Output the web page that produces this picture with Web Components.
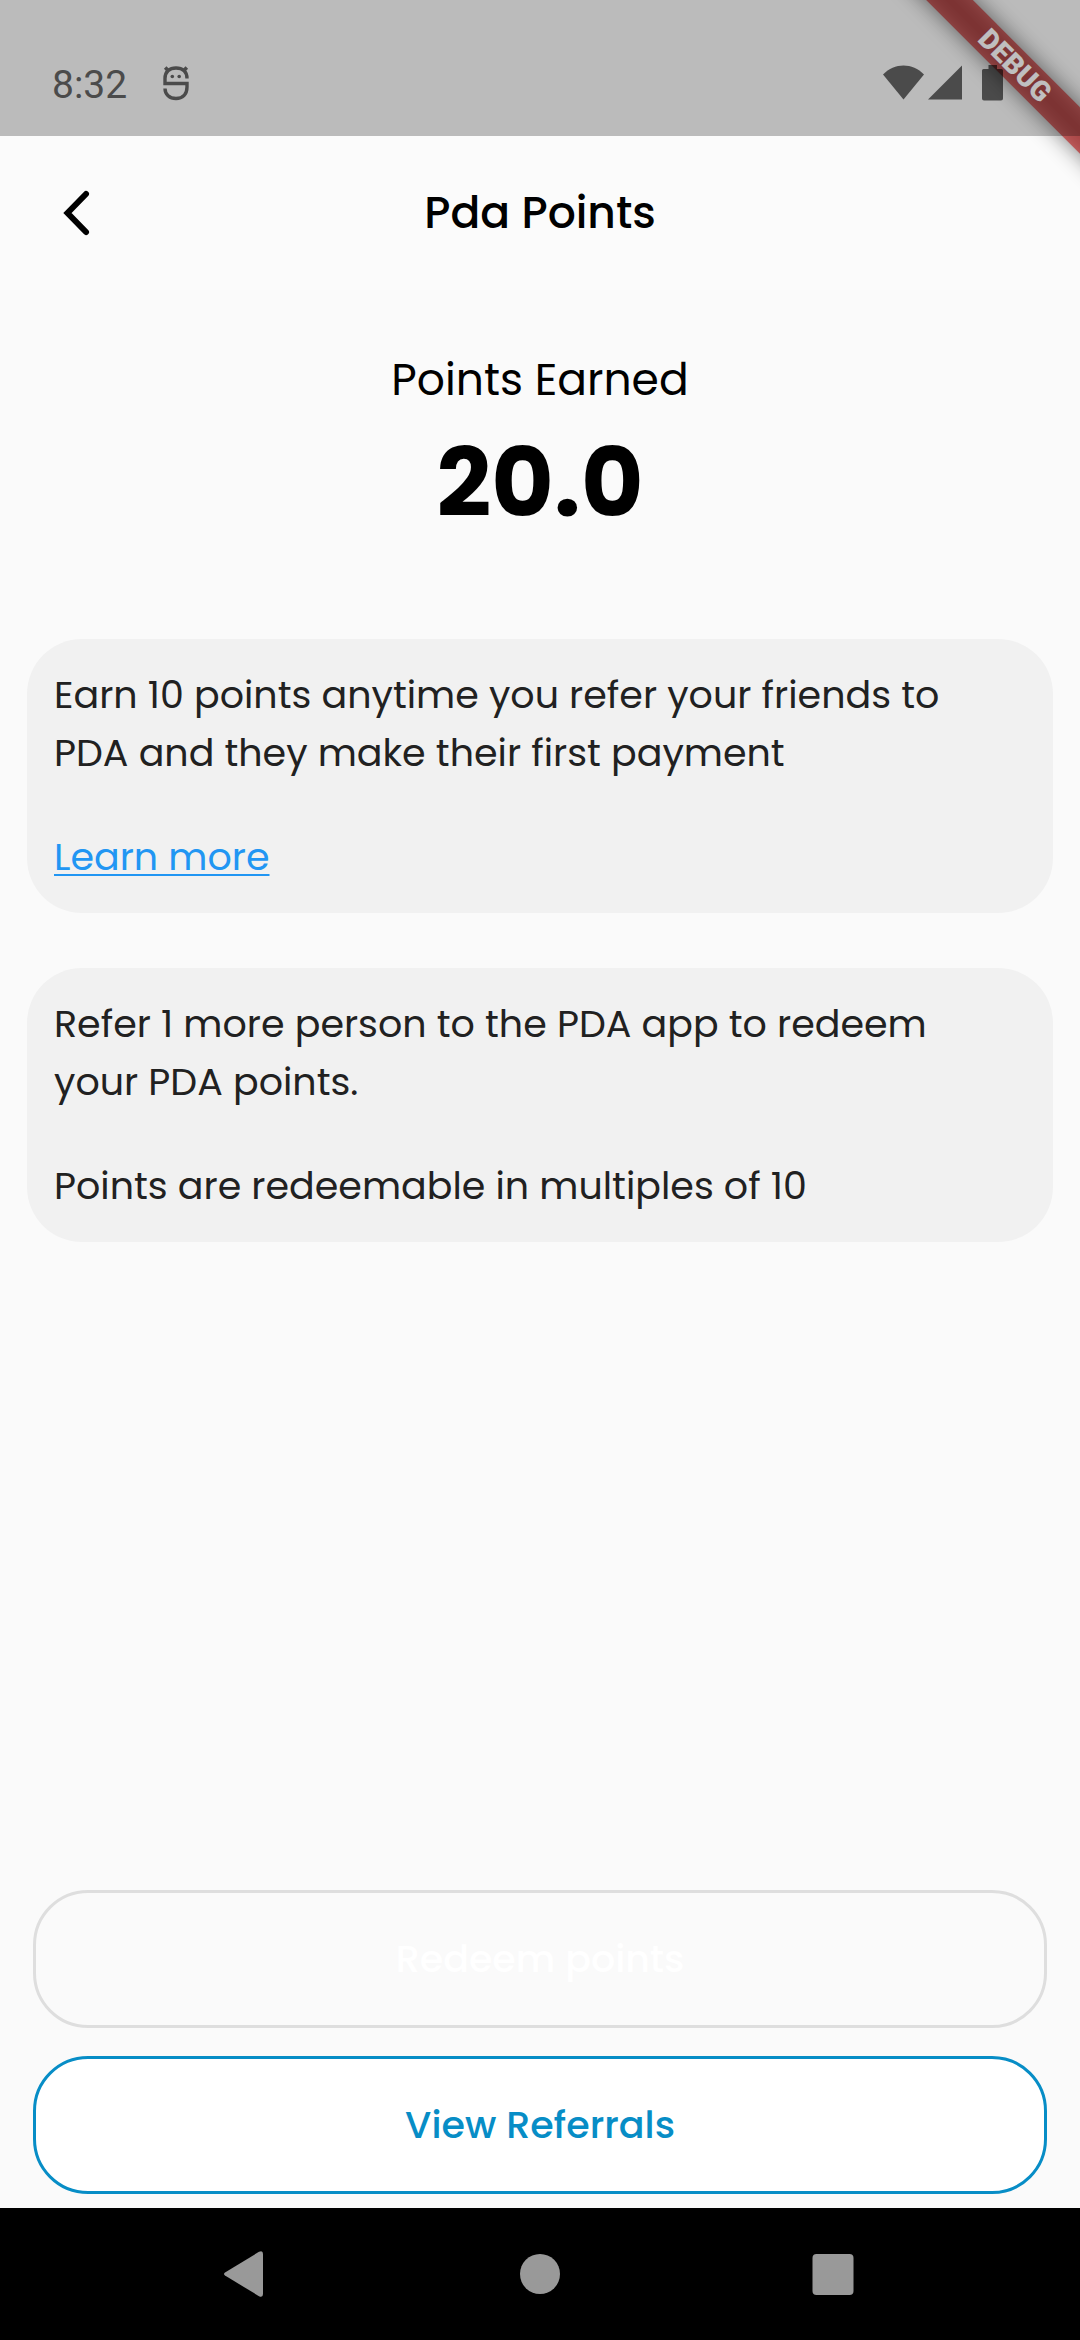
<!DOCTYPE html>
<html lang="en">
<head>
<meta charset="utf-8">
<meta name="viewport" content="width=device-width, initial-scale=1">
<title>Pda Points</title>
<style>
  body { margin: 0; background: #fafafa; }
</style>
</head>
<body>
<pda-app></pda-app>
<script>
const define = (name, html) => customElements.define(name, class extends HTMLElement {
  constructor() {
    super();
    const t = document.createElement('template');
    t.innerHTML = '<style>*{box-sizing:border-box;margin:0}</style>' + html;
    this.attachShadow({ mode: 'open' }).append(t.content.cloneNode(true));
  }
});

define('status-bar', `
<style>
  :host { display: flex; justify-content: space-between; align-items: flex-start; height: 136px;
    padding: 65px 77px 0 52px; position: relative; z-index: 2;
    background: rgba(0,0,0,.25); color: #4b4b4b; font-family: Roboto, sans-serif; }
  div { display: flex; align-items: flex-start; }
  .left { gap: 36px; }
  time { font-size: 39px; line-height: 40px; }
  svg { display: block; height: 36px; }
</style>
<div class="left">
  <time>8:32</time>
  <svg width="26" height="36" viewBox="0 0 26 36" fill="none" stroke="currentColor" stroke-width="3.4">
    <path d="M24 13.5C24 6.500 19.500 3 13 3S2 6.500 2 13.500V18.500H24V22C24 29.500 19.500 33.500 13 33.500S2 29.500 2 23.500"/>
    <path d="M2.200 2.600L5.800 6.200M23.800 2.600L20.200 6.200" stroke-width="3.6"/>
    <circle cx="9.3" cy="11.5" r="1.8" fill="currentColor" stroke="none"/>
    <circle cx="16.2" cy="11.5" r="1.8" fill="currentColor" stroke="none"/>
  </svg>
</div>
<div>
  <svg width="120" height="36" viewBox="0 0 120 36" fill="#000" fill-opacity=".6">
    <path d="M0 9.500C11.500-2.600 29.500-2.600 41 9.500L20.500 34.500Z"/>
    <path d="M45 34.500L79 .500V34.500Z"/>
    <path d="M105.500 0H114V4H118.500Q120 4 120 5.500V33.500Q120 35.500 118 35.500H101Q99 35.500 99 33.500V5.500Q99 4 100.500 4H105.500Z"/>
  </svg>
</div>`);

define('debug-banner', `
<style>
  :host { display: block; position: absolute; top: 0; right: 0; width: 240px; height: 240px;
    overflow: hidden; pointer-events: none; z-index: 1; }
  .band { position: absolute; right: -95px; top: 49px; width: 320px; height: 33px; transform: rotate(45deg); }
  .band::before { content: ""; position: absolute; inset: 0; background: rgba(0,0,0,.5); filter: blur(11px); }
  span { position: absolute; inset: 0; background: rgba(183,28,28,.63); color: #fff; text-align: center;
    font: 900 28px/33px Roboto, sans-serif; }
</style>
<div class="band"><span>DEBUG</span></div>`);

define('app-header', `
<style>
  :host { display: grid; grid-template-columns: 154px 1fr 154px; align-items: center; height: 154px; background: #fbfbfb; }
  button { width: 154px; height: 154px; padding: 0; border: 0; background: none; color: #000;
    display: flex; align-items: center; justify-content: center; }
  h1 { font-size: var(--title); font-weight: 500; text-align: center; line-height: 66px; }
</style>
<button aria-label="Back"><svg width="48" height="48" viewBox="0 0 48 48" fill="none" stroke="currentColor" stroke-width="6" stroke-linecap="round"><path d="M33 5L14.500 24L33 43"/></svg></button>
<h1><slot></slot></h1>`);

define('points-total', `
<style>
  :host { display: block; padding: 57px 0 86px; text-align: center; color: #000; }
  p { font-size: var(--title); line-height: 66px; }
  strong { display: block; font-size: 96px; line-height: 140px; font-weight: 700; }
</style>
<p>Points Earned</p>
<strong><slot></slot></strong>`);

define('info-card', `
<style>
  :host { display: flex; flex-direction: column; align-items: flex-start; gap: 46px; padding: 27px;
    border-radius: 55px; background: #f1f1f1; color: #212121; font-size: var(--text); line-height: 58px; }
  ::slotted(p) { margin: 0; }
  ::slotted(a) { color: #2196f3; text-decoration: underline; text-decoration-thickness: 2px; text-underline-offset: 4px; }
</style>
<slot></slot>`);

define('outline-button', `
<style>
  :host { display: block; }
  button { display: block; width: 100%; height: 138px; padding: 0; border: 3px solid #078dc6; border-radius: 55px;
    background: #fff; color: #078dc6; font-family: inherit; font-size: var(--text); font-weight: 500; line-height: 58px; }
  :host([disabled]) button { border-color: #dedede; background: transparent; color: #fff; }
</style>
<button><slot></slot></button>`);

define('system-nav', `
<style>
  :host { display: flex; height: 132px; padding: 0 101px; background: #000; color: #999; }
  button { flex: 1; padding: 0; border: 0; background: none; color: inherit; display: flex; align-items: center; justify-content: center; }
</style>
<button aria-label="Back"><svg width="48" height="48" viewBox="0 0 48 48" fill="currentColor"><path d="M2 22.500L36 1.800Q40 0 40 4V44Q40 48 36 46.200L2 25.500Q0 24 2 22.500Z"/></svg></button>
<button aria-label="Home"><svg width="48" height="48" viewBox="0 0 48 48" fill="currentColor"><circle cx="24" cy="24" r="20"/></svg></button>
<button aria-label="Overview"><svg width="48" height="48" viewBox="0 0 48 48" fill="currentColor"><rect x="3.500" y="4" width="41" height="41" rx="4"/></svg></button>`);

define('pda-app', `
<style>
  :host { display: flex; flex-direction: column; min-height: 100vh; position: relative; overflow: hidden;
    background: #fafafa; font-family: Poppins, Inter, sans-serif; --title: 44px; --text: 38px; }
  main { flex: 1; display: flex; flex-direction: column; }
  .cards { display: flex; flex-direction: column; gap: 55px; padding: 0 27px; }
  .actions { display: flex; flex-direction: column; gap: 28px; margin-top: auto; padding: 28px 33px 14px; }
</style>
<status-bar></status-bar>
<debug-banner></debug-banner>
<app-header>Pda Points</app-header>
<main>
  <points-total>20.0</points-total>
  <section class="cards">
    <info-card>
      <p>Earn 10 points anytime you refer your friends to<br>PDA and they make their first payment</p>
      <a href="#learn">Learn more</a>
    </info-card>
    <info-card>
      <p>Refer 1 more person to the PDA app to redeem<br>your PDA points.</p>
      <p>Points are redeemable in multiples of 10</p>
    </info-card>
  </section>
  <div class="actions">
    <outline-button disabled>Redeem points</outline-button>
    <outline-button>View Referrals</outline-button>
  </div>
</main>
<system-nav></system-nav>`);
</script>
</body>
</html>
